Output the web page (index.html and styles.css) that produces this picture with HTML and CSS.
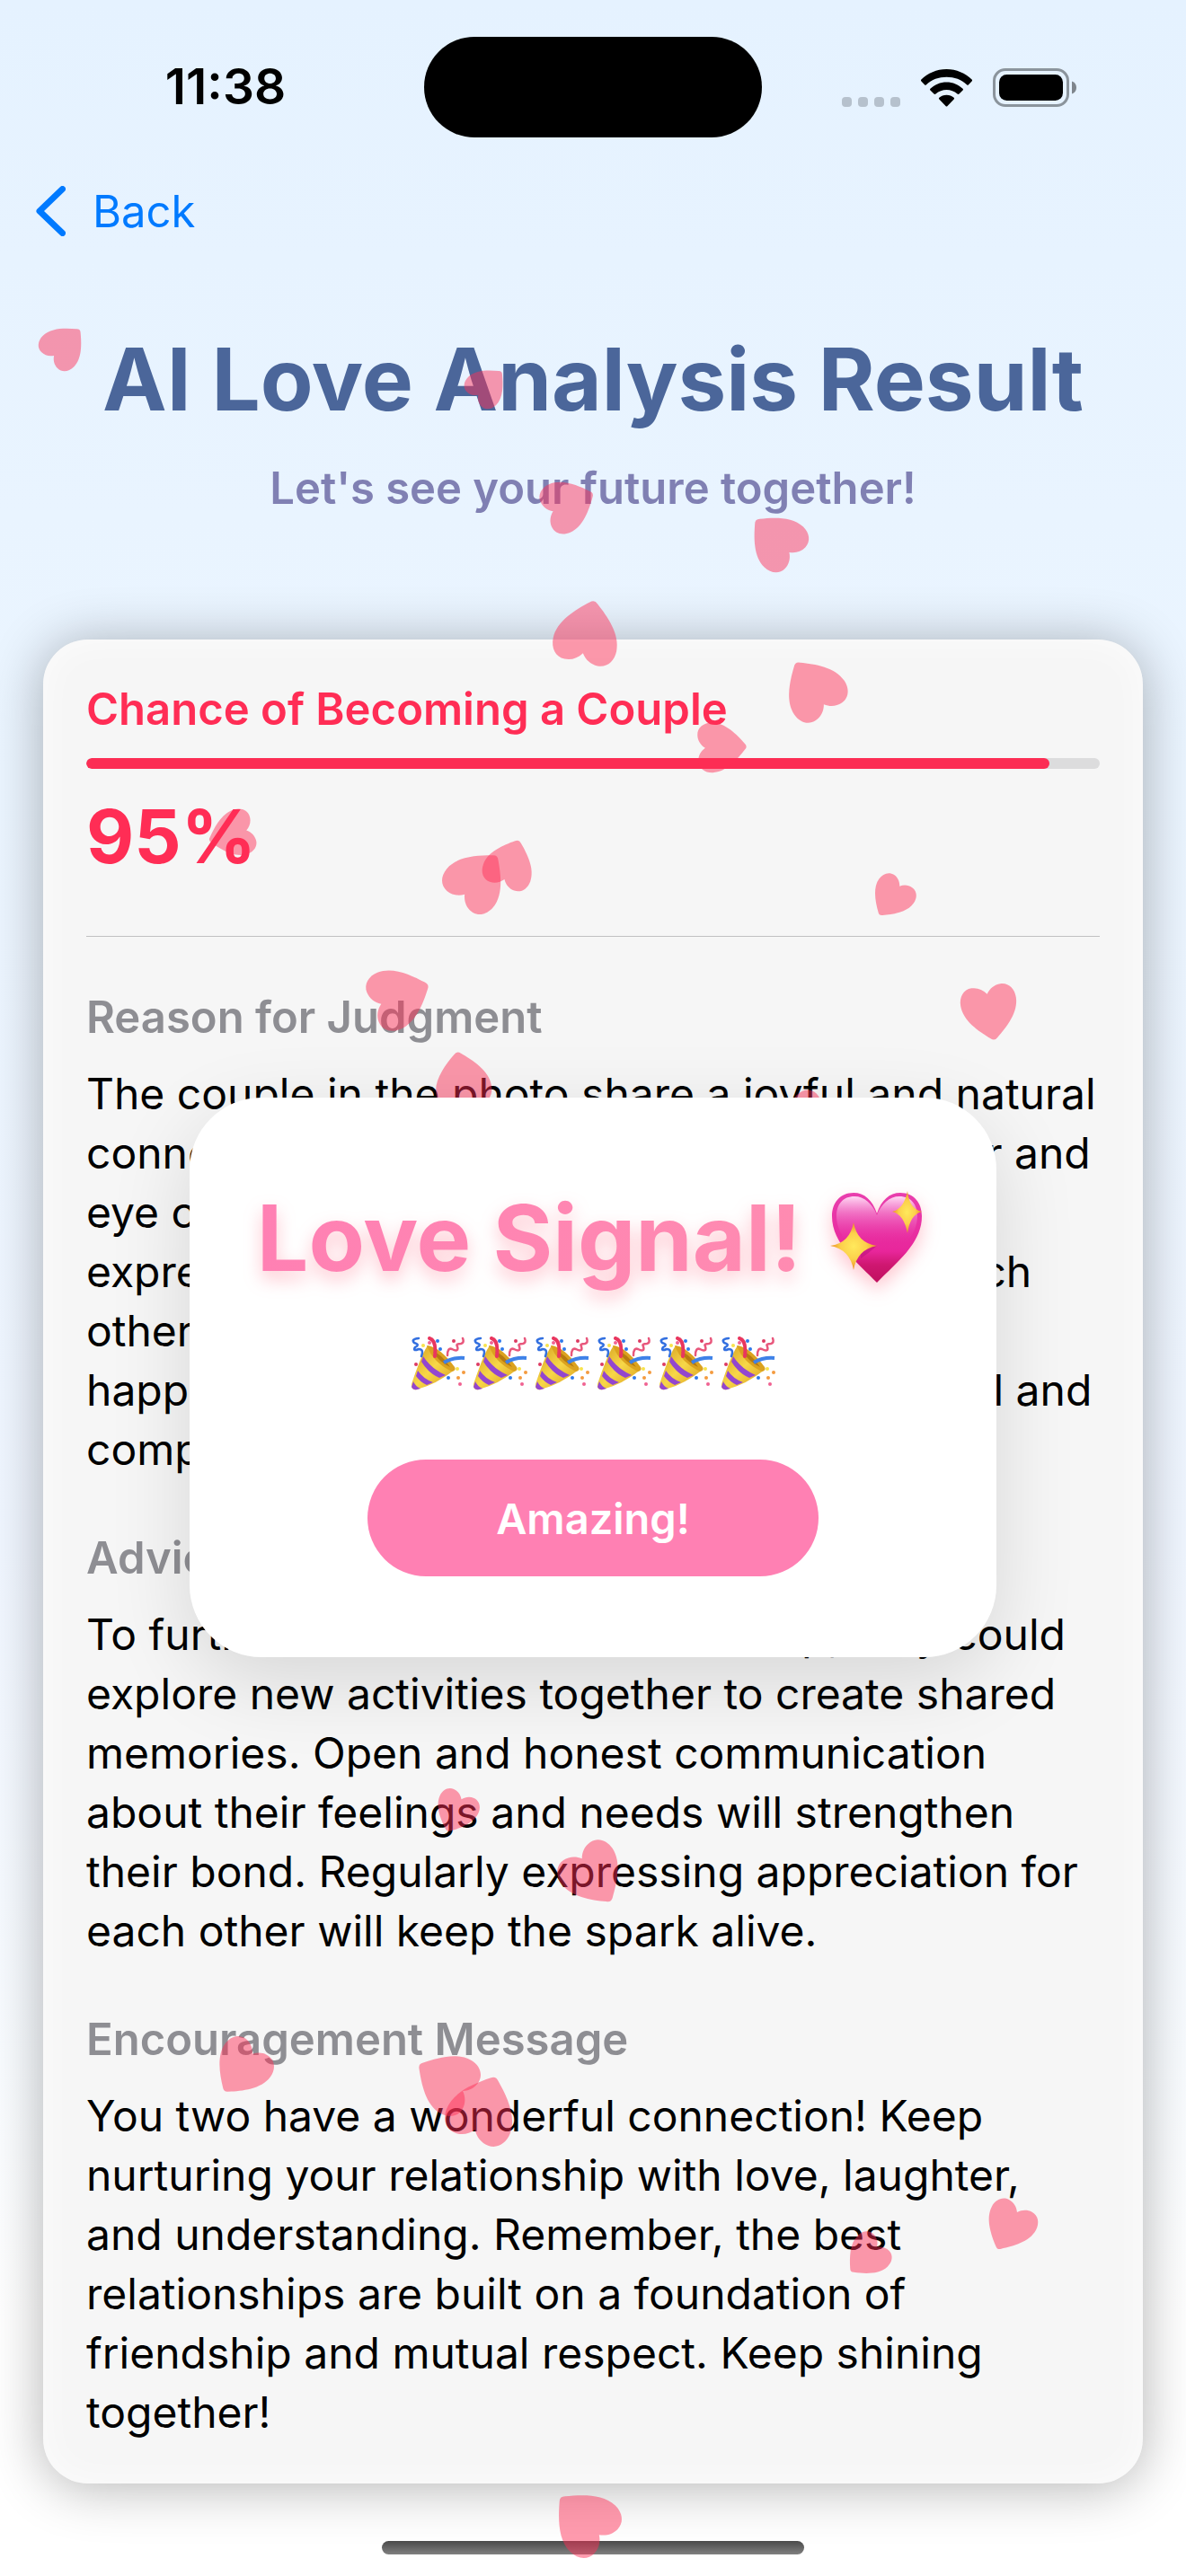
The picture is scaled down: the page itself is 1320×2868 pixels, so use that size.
FILE: index.html
```html
<!DOCTYPE html>
<html lang="en">
<head>
<meta charset="utf-8">
<meta name="viewport" content="width=device-width, initial-scale=1">
<title>AI Love Analysis Result</title>
<link rel="stylesheet" href="styles.css">
</head>
<body>
<div class="screen">
  <header class="status-bar">
    <div class="status-time"><time class="clock">11:38</time></div>
    <div class="island"></div>
    <div class="status-icons">
      <svg class="icon-signal" viewBox="0 0 65 11" aria-label="No signal"><g fill="#b6c1cd"><rect width="11" height="11" rx="4"/><rect x="18" width="11" height="11" rx="4"/><rect x="36" width="11" height="11" rx="4"/><rect x="54" width="11" height="11" rx="4"/></g></svg>
      <svg class="icon-wifi" viewBox="0 0 57 42" aria-label="Wi-Fi"><path d="M28.500 0C39.500 0 49.500 4.500 56.600 11.500Q57.500 12.500 56.600 13.400L53 17.200Q52 18.200 51 17.200C45 11.500 37.200 8.800 28.500 8.800S12 11.500 6 17.200Q5 18.200 4 17.200L.4 13.400Q-.5 12.500 .4 11.500C7.500 4.500 17.500 0 28.500 0Z"/><path d="M28.500 14.500C35.500 14.500 41.700 17.200 46.600 21.800Q47.500 22.700 46.600 23.600L42.500 27.600Q41.500 28.500 40.500 27.600C37.200 24.600 33 23 28.500 23S19.800 24.600 16.500 27.600Q15.500 28.500 14.500 27.600L10.400 23.600Q9.500 22.700 10.400 21.800C15.300 17.200 21.500 14.500 28.500 14.500Z"/><path d="M28.500 28.800C31.800 28.800 34.400 30 36.700 31.800Q37.600 32.600 36.700 33.500L29.500 41Q28.500 42 27.500 41L20.300 33.500Q19.400 32.600 20.300 31.800C22.600 30 25.200 28.800 28.500 28.800Z"/></svg>
      <svg class="icon-battery" viewBox="0 0 93 43" aria-label="Battery full"><rect x="1.500" y="1.500" width="82" height="40" rx="12.500" fill="none" stroke="#8b949c" stroke-width="3"/><rect x="7" y="7" width="71" height="29" rx="8.500"/><path d="M88 14.500C91 15.500 93 18 93 21.500S91 27.500 88 28.500Z" fill="#7e858c"/></svg>
    </div>
  </header>

  <nav class="nav-bar">
    <a class="back" href="#">
      <svg class="icon-back" viewBox="0 0 33 56" aria-hidden="true"><path d="M29.500 3.500L4 28L29.500 52.500" fill="none" stroke="#007aff" stroke-width="7" stroke-linecap="round" stroke-linejoin="round"/></svg>
      Back
    </a>
  </nav>

  <main class="content">
    <h1 class="page-title">AI Love Analysis Result</h1>
    <p class="subtitle">Let's see your future together!</p>

    <article class="card">
      <label class="chance-label" for="chance">Chance of Becoming a Couple</label>
      <progress class="chance-bar" id="chance" value="95" max="100">95%</progress>
      <p class="chance-value">95%</p>
      <hr class="divider">
      <section class="block">
        <h2 class="block-title">Reason for Judgment</h2>
        <p class="block-text">The couple in the photo share a joyful and natural<br>connection, as shown by their warm laughter and<br>eye contact. Their kind smiles and playful<br>expressions reveal a deeper affection for each<br>other. Their gestures are open, and there is<br>happiness in the ways they seem so cheerful and<br>compatible.</p>
      </section>
      <section class="block">
        <h2 class="block-title">Advice</h2>
        <p class="block-text">To further enhance their relationship, they could<br>explore new activities together to create shared<br>memories. Open and honest communication<br>about their feelings and needs will strengthen<br>their bond. Regularly expressing appreciation for<br>each other will keep the spark alive.</p>
      </section>
      <section class="block">
        <h2 class="block-title">Encouragement Message</h2>
        <p class="block-text">You two have a wonderful connection! Keep<br>nurturing your relationship with love, laughter,<br>and understanding. Remember, the best<br>relationships are built on a foundation of<br>friendship and mutual respect. Keep shining<br>together!</p>
      </section>
    </article>
  </main>

  <footer class="home-area"><div class="home-indicator"></div></footer>

  <svg class="hearts" viewBox="0 0 1320 2868" preserveAspectRatio="xMidYMin slice" aria-hidden="true">
    <defs>
      <path id="heart" d="M0-33C-6-42-15-47-25-47C-39-47-48-35-48-20C-48 6-24 28-6 43Q0 49 6 43C24 28 48 6 48-20C48-35 39-47 25-47C15-47 6-42 0-33Z"/>
    </defs>
    <use href="#heart" transform="translate(72 384) rotate(225) scale(.51)"/>
    <use href="#heart" transform="translate(543 429) rotate(225) scale(.46)"/>
    <use href="#heart" transform="translate(634 561) rotate(246) scale(.61)"/>
    <use href="#heart" transform="translate(863 600) rotate(134) scale(.65)"/>
    <use href="#heart" transform="translate(654 703) rotate(192) scale(.75)"/>
    <use href="#heart" transform="translate(904 765) rotate(146) scale(.7)"/>
    <use href="#heart" transform="translate(804 832) rotate(268) scale(.58)"/>
    <use href="#heart" transform="translate(257 929) rotate(75) scale(.54)"/>
    <use href="#heart" transform="translate(532 978) rotate(220) scale(.7)"/>
    <use href="#heart" transform="translate(568 961) rotate(200) scale(.58)"/>
    <use href="#heart" transform="translate(992 1000) rotate(35) scale(.49)"/>
    <use href="#heart" transform="translate(446 1109) rotate(248) scale(.71)"/>
    <use href="#heart" transform="translate(514 1201) rotate(170) scale(.65)"/>
    <use href="#heart" transform="translate(1102 1128) rotate(-9) scale(.65)"/>
    <use href="#heart" transform="translate(899 1249) rotate(45) scale(.62)"/>
    <use href="#heart" transform="translate(507 2018) rotate(24) scale(.49)"/>
    <use href="#heart" transform="translate(661 2089) rotate(-34) scale(.72)"/>
    <use href="#heart" transform="translate(268 2304) rotate(37) scale(.65)"/>
    <use href="#heart" transform="translate(495 2316) rotate(121) scale(.71)"/>
    <use href="#heart" transform="translate(538 2347) rotate(201) scale(.79)"/>
    <use href="#heart" transform="translate(1123 2480) rotate(28) scale(.58)"/>
    <use href="#heart" transform="translate(964 2513) rotate(47) scale(.5)"/>
    <use href="#heart" transform="translate(649 2805) rotate(134) scale(.75)"/>
  </svg>

  <div class="overlay">
    <div class="popup" role="dialog" aria-labelledby="popup-title">
      <h2 class="popup-title" id="popup-title">
        <span class="popup-text">Love Signal!</span>
        <svg class="sparkling-heart" viewBox="0 0 104 106" role="img" aria-label="Sparkling heart">
          <defs>
            <linearGradient id="heart-fill" x1="0" y1="0" x2="0" y2="1"><stop offset="0" stop-color="#e93fae"/><stop offset=".65" stop-color="#e8269b"/><stop offset=".8" stop-color="#cf1771"/><stop offset="1" stop-color="#c0105f"/></linearGradient>
            <linearGradient id="heart-shine" x1="0" y1="0" x2="0" y2="1"><stop offset="0" stop-color="#ffd9f4"/><stop offset=".35" stop-color="#f48ad0" stop-opacity=".75"/><stop offset="1" stop-color="#ea3aa9" stop-opacity="0"/></linearGradient>
            <radialGradient id="spark-fill"><stop offset="0" stop-color="#ffe95c"/><stop offset=".55" stop-color="#fcd04b"/><stop offset="1" stop-color="#e98f22"/></radialGradient>
          </defs>
          <path d="M52 26C47 11 38 3 26 3C11 3 2 14 2 29C2 60 31 81 52 103C73 81 102 60 102 29C102 14 93 3 78 3C66 3 57 11 52 26Z" fill="url(#heart-fill)"/>
          <path d="M52 28C47 15 38 7 27 7C14 7 7 16 7 29C7 40 12 50 18 57L86 57C92 50 97 40 97 29C97 16 90 7 77 7C66 7 57 15 52 28Z" fill="url(#heart-shine)"/>
          <path d="M34 76Q43 70 52 62Q42 65 34 60Z" fill="#b5127a" opacity=".5"/>
          <path d="M26 36Q30 59 52 62Q30 66 26 89Q22 66 0 62Q22 59 26 36Z" fill="url(#spark-fill)"/>
          <path d="M86 1Q88 21 102 24Q89 27 86 48Q82 27 69 24Q82 21 86 1Z" fill="url(#spark-fill)"/>
        </svg>
      </h2>
      <div class="party" role="img" aria-label="Party poppers">
        <svg class="popper" viewBox="0 0 60 60">
          <defs>
            <linearGradient id="cone" x1="0" y1="0" x2="1" y2="1"><stop offset="0" stop-color="#d39a1c"/><stop offset=".5" stop-color="#f7d748"/><stop offset="1" stop-color="#d99a1a"/></linearGradient>
            <g id="popper">
              <path d="M18 10Q11 20 0 53Q-1 60 6 59Q28 53 48 37Q42 24 18 10Z" fill="url(#cone)"/>
              <path d="M17 10Q31 11 48 34Q50 38 45 39Q24 29 17 10Z" fill="#dba21f"/>
              <path d="M24 17Q33 19 43 34Q30 28 24 17Z" fill="#b67a10"/>
              <path d="M13 22L11 28Q19 41 31 46L38 43Q22 36 13 22ZM7 38L5 44Q10 51 17 54L24 51Q13 47 7 38ZM2 50L0 56Q2 60 6 59L10 58Q4 55 2 50Z" fill="#9346cf"/>
              <g fill="none" stroke-linecap="round">
                <path d="M20 2Q28 4 26 22" stroke="#e9365f" stroke-width="4"/>
                <path d="M36 29Q46 23 59 24" stroke="#3f82e8" stroke-width="4" stroke-linecap="butt"/>
                <path d="M40 21Q40 12 45 14Q53 18 51 11Q49 8 55 8Q59 7 57 2" stroke="#e8577c" stroke-width="2.500"/>
                <path d="M8 2Q-1 3 3 7Q10 9 4 12Q1 17 8 14Q14 14 11 22" stroke="#3370e0" stroke-width="2.500"/>
              </g>
              <g fill="#2f78ea"><circle cx="29" cy="5" r="2"/><circle cx="32" cy="14" r="2"/><circle cx="41" cy="46" r="2"/></g>
              <g fill="#f06292"><circle cx="20" cy="7" r="2"/><circle cx="54" cy="53" r="2"/></g>
              <g fill="#dd3a62"><circle cx="5" cy="31" r="2"/><circle cx="47" cy="5" r="2"/></g>
              <g fill="#f49b3f"><circle cx="58" cy="40" r="2"/><circle cx="52" cy="46" r="2"/></g>
              <g fill="#f8e34b"><circle cx="13" cy="10" r="2"/><circle cx="51" cy="36" r="2"/></g>
            </g>
          </defs>
          <use href="#popper"/>
        </svg>
        <svg class="popper" viewBox="0 0 60 60"><use href="#popper"/></svg>
        <svg class="popper" viewBox="0 0 60 60"><use href="#popper"/></svg>
        <svg class="popper" viewBox="0 0 60 60"><use href="#popper"/></svg>
        <svg class="popper" viewBox="0 0 60 60"><use href="#popper"/></svg>
        <svg class="popper" viewBox="0 0 60 60"><use href="#popper"/></svg>
      </div>
      <button class="popup-button" type="button">Amazing!</button>
    </div>
  </div>
</div>
</body>
</html>
```
FILE: styles.css
```css
* { box-sizing: border-box; }

body,
h1,
h2,
p { margin: 0; }

body {
  font-family: Inter, "Liberation Sans", sans-serif;
  font-size: 49px;
  color: #000;
}

.screen {
  position: relative;
  min-height: 100vh;
  display: flex;
  flex-direction: column;
  overflow: hidden;
  background: linear-gradient(#e5f2ff, #ebf5ff 30%, #f0f6ff 60%, #f9fcff 80%, #fff 90%);
}

/* Status bar */
.status-bar {
  display: grid;
  grid-template-columns: 1fr auto 1fr;
  align-items: center;
  padding: 41px 0;
}

.status-time {
  padding-left: 30px;
  text-align: center;
}

.clock {
  font-size: 55px;
  line-height: 60px;
  font-weight: 600;
}

.island {
  width: 376px;
  height: 112px;
  border-radius: 56px;
  background: #000;
}

.status-icons {
  display: flex;
  align-items: flex-end;
  justify-content: center;
  padding-right: 34px;
}

.icon-signal { width: 65px; height: 11px; }
.icon-wifi { width: 57px; height: 42px; margin: 0 23px; }
.icon-battery { width: 93px; height: 43px; }

/* Navigation */
.nav-bar {
  height: 82px;
  padding: 0 40px;
  display: flex;
  align-items: center;
}

.back {
  display: flex;
  align-items: center;
  gap: 30px;
  color: #007aff;
  text-decoration: none;
}

.icon-back { width: 33px; height: 56px; }

/* Heading */
.content { padding: 85px 48px 0; }

.page-title {
  font-size: 96px;
  line-height: 122px;
  font-weight: 700;
  text-align: center;
  white-space: nowrap;
  color: #4b669a;
}

.subtitle {
  margin: 31px 0 138px;
  line-height: 60px;
  font-weight: 600;
  text-align: center;
  color: #8080b3;
}

/* Result card */
.card {
  display: flex;
  flex-direction: column;
  padding: 48px 48px 46px;
  border-radius: 50px;
  background: #f6f6f6;
  box-shadow: 0 4px 60px rgba(0, 0, 0, .3), inset 0 0 40px rgba(255, 255, 255, .7);
}

.chance-label {
  line-height: 60px;
  font-weight: 600;
  color: #ff2d55;
}

.chance-bar {
  display: block;
  width: 100%;
  height: 12px;
  margin: 24px 0 26px;
  border: 0;
  border-radius: 6px;
  overflow: hidden;
  appearance: none;
  background: #dcdcdd;
}

.chance-bar::-webkit-progress-bar { background: #dcdcdd; }

.chance-bar::-webkit-progress-value {
  border-radius: 6px;
  background: #fc2d54;
}

.chance-value {
  font-size: 82px;
  line-height: 100px;
  font-weight: 700;
  color: #ff2d55;
}

.divider {
  width: 100%;
  height: 1px;
  margin: 60px 0 2px;
  border: 0;
  background: #c0c0c2;
}

.block { margin-top: 58px; }

.block-title {
  margin-bottom: 22px;
  font-size: 49px;
  line-height: 60px;
  font-weight: 600;
  color: #8e8e93;
}

.block-text {
  font-size: 48px;
  line-height: 66px;
  white-space: nowrap;
}

/* Home indicator */
.home-area {
  display: flex;
  justify-content: center;
  padding: 64px 0 24px;
}

.home-indicator {
  width: 470px;
  height: 15px;
  border-radius: 8px;
  background: linear-gradient(#4a4a4a, #808080);
}

/* Falling hearts */
.hearts {
  position: absolute;
  inset: 0;
  width: 100%;
  height: 100%;
  fill: #ff2d55;
  fill-opacity: .48;
  pointer-events: none;
}

/* Popup */
.overlay {
  position: absolute;
  inset: 0;
  padding-top: 199px;
  display: flex;
  align-items: center;
  justify-content: center;
}

.popup {
  width: 68%;
  padding: 90px 0;
  display: flex;
  flex-direction: column;
  align-items: center;
  border-radius: 80px;
  background: #fff;
  box-shadow: 0 26px 90px rgba(0, 0, 0, .13);
}

.popup-title {
  display: flex;
  align-items: center;
  gap: 32px;
  padding-right: 6px;
  font-size: 102px;
  line-height: 132px;
  font-weight: 700;
  white-space: nowrap;
  filter: drop-shadow(0 9px 10px rgba(255, 80, 110, .32));
}

.popup-text {
  background: linear-gradient(90deg, #ff80b3, #ff8bb1);
  background-clip: text;
  color: transparent;
}

.sparkling-heart { width: 104px; height: 106px; }

.party {
  display: flex;
  gap: 9px;
  margin: 44px 0 77px;
}

.popper { width: 60px; height: 60px; }

.popup-button {
  width: 502px;
  height: 130px;
  border: 0;
  border-radius: 65px;
  background: #ff80b3;
  color: #fff;
  font: inherit;
  font-size: 47px;
  font-weight: 600;
}
```
